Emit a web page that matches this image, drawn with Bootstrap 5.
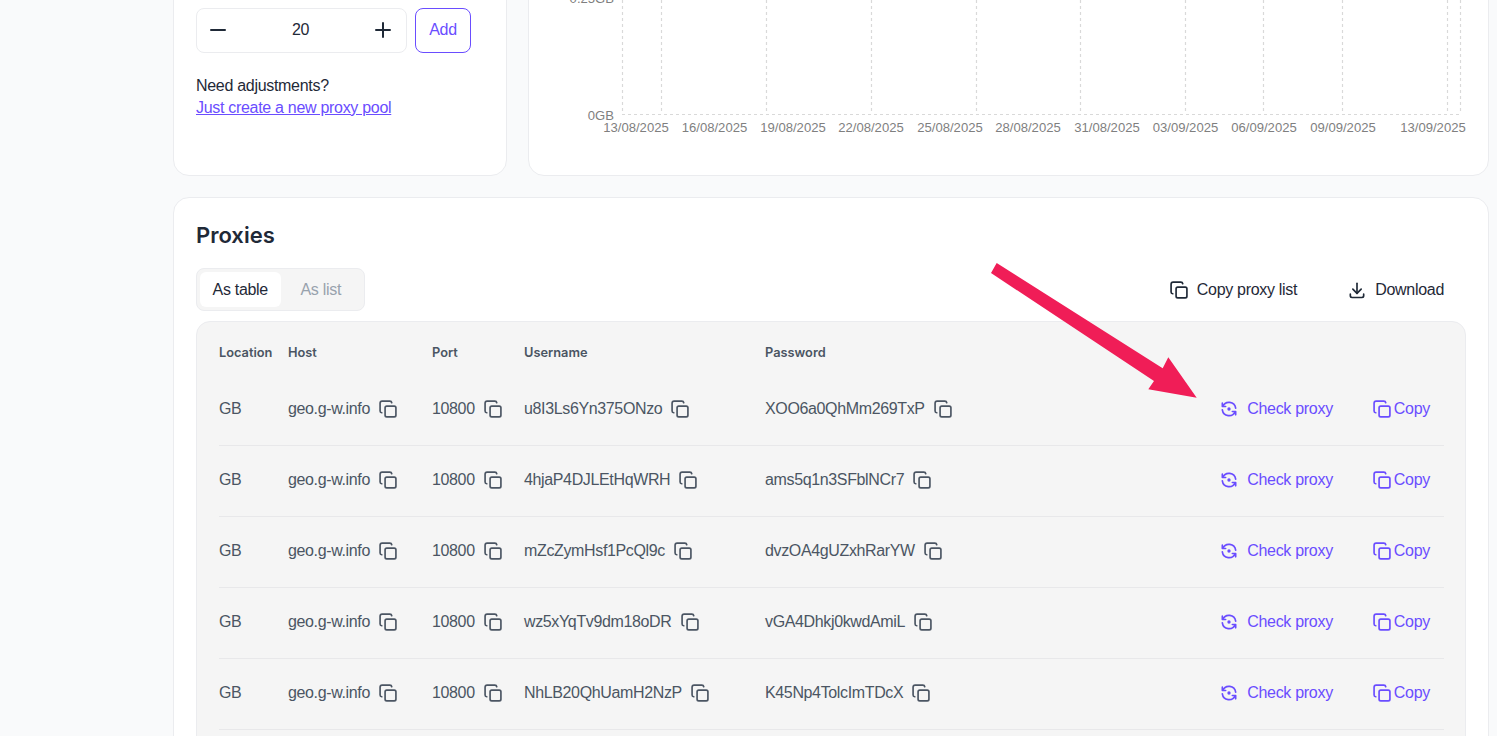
<!DOCTYPE html>
<html lang="en">
<head>
<meta charset="utf-8">
<title>Proxies</title>
<link href="https://cdn.jsdelivr.net/npm/bootstrap@5.3.0/dist/css/bootstrap.min.css" rel="stylesheet">
<style>
:root{--brand:#6a4dff;--line:#ebecef;}
html,body{height:736px;overflow:hidden;background:#f9fafb;}
body{font-family:"Liberation Sans",Arial,sans-serif;font-size:16px;letter-spacing:-.3px;color:#1f2937;}
.shell{position:relative;height:736px;overflow:hidden;padding:0 8px 0 173px;}
.shift{margin-top:-24px;}
.top-row{display:grid;grid-template-columns:334px 961px;column-gap:21px;margin-bottom:21px;}
.panel{background:#fff;border:1px solid var(--line);border-radius:16px;}
.top-panel{height:200px;}
.left-panel{padding:31px 22px 0;}
.stepper{width:211px;height:45px;border:1px solid var(--line);border-radius:8px;padding:0 11px 2px 9px;color:#1f2937;}
.stepper svg{width:24px;height:24px;}
.add-btn{width:56px;height:45px;border:1px solid var(--brand);border-radius:8px;color:var(--brand);background:#fff;padding:0 0 2px;font-size:inherit;letter-spacing:inherit;}
.need{margin-top:22px;line-height:22px;color:#1f2937;}
.need a{color:var(--brand);display:block;}
.chart{display:block;width:100%;height:100%;}
.chart text{font-family:"Liberation Sans",Arial,sans-serif;font-size:13.1px;letter-spacing:0;fill:#7f7f7f;}
.chart line{stroke:#d9d9d9;stroke-dasharray:3 3;stroke-width:1.2;}
.main-panel{height:700px;padding:22px 22px;}
.heading{font-family:Inter,"Liberation Sans",sans-serif;font-size:22px;font-weight:600;line-height:30px;letter-spacing:0;color:#1f2937;margin:0 0 18px;}
.toggle{padding:3px;background:#f5f5f5;border:1px solid var(--line);border-radius:8px;height:43px;width:169px;}
.toggle span{display:flex;align-items:center;justify-content:center;border-radius:6px;height:35px;width:82px;color:#98a2ad;}
.toggle .on{background:#fff;color:#1f2937;}
.tool{color:#1f2937;background:none;border:0;padding:0;gap:8px;font-size:inherit;letter-spacing:inherit;}
.tool svg{width:20px;height:20px;}
.tools{gap:50px;padding-right:22px;}
.bar{height:43px;margin-bottom:10px;}
.tbl-wrap{background:#f5f5f5;border:1px solid var(--line);border-radius:14px;padding:0 22px 40px;}
.ptable{width:1225px;table-layout:fixed;border-collapse:collapse;margin:0;--bs-table-bg:transparent;}
.ptable th{font-family:Inter,"Liberation Sans",sans-serif;font-size:12.8px;font-weight:600;letter-spacing:0;color:#4b5563;height:52px;padding:10px 0 0;border:0;vertical-align:middle;background:none;}
.ptable td{height:71px;padding:0 0 1px;border:0;border-bottom:1px solid #e8e8ea;color:#4b5563;letter-spacing:-.36px;vertical-align:middle;background:none;}
.cellwrap{display:flex;align-items:center;gap:8px;}
.cp{width:20px;height:20px;flex:none;color:#4b5563;}
.act{display:flex;align-items:center;color:var(--brand);white-space:nowrap;letter-spacing:-.3px;}
.act svg{width:20px;height:20px;flex:none;}
.chk{gap:8px;}
.cpy{gap:2px;margin-left:39px;}
.acts{display:flex;justify-content:flex-end;padding-right:14px;}
.ico{fill:none;stroke:currentColor;stroke-width:2;stroke-linecap:round;stroke-linejoin:round;}
.arrow{position:absolute;left:0;top:0;width:1497px;height:736px;pointer-events:none;}
</style>
</head>
<body>
<svg width="0" height="0" class="position-absolute">
  <symbol id="i-copy" viewBox="0 0 24 24"><rect x="8.5" y="8.5" width="13" height="13" rx="2"/><path d="M4.5 16.5c-1.2-.2-2-1.1-2-2.2V5c0-1.4 1.100-2.500 2.500-2.500h9.300c1.100 0 2 .8 2.200 2"/></symbol>
  <symbol id="i-check" viewBox="0 0 24 24"><path d="M20 11a8.100 8.100 0 0 0-15.500-2m-.5-4v4h4"/><path d="M4 13a8.100 8.100 0 0 0 15.500 2m.5 4v-4h-4"/><circle cx="12" cy="12" r="1"/></symbol>
  <symbol id="i-down" viewBox="0 0 24 24"><path d="M4 17v2a2 2 0 0 0 2 2h12a2 2 0 0 0 2-2v-2"/><path d="M7 11l5 5l5-5"/><path d="M12 4v12"/></symbol>
</svg>
<div class="shell">
  <div class="shift">
    <div class="top-row">
      <section class="panel top-panel left-panel">
        <div class="d-flex gap-2">
          <div class="stepper d-flex align-items-center justify-content-between">
            <svg viewBox="0 0 24 24" class="ico"><path d="M5 12h14"/></svg>
            <span>20</span>
            <svg viewBox="0 0 24 24" class="ico"><path d="M12 5v14M5 12h14"/></svg>
          </div>
          <button class="add-btn" type="button">Add</button>
        </div>
        <div class="need">Need adjustments?<a href="#">Just create a new proxy pool</a></div>
      </section>
      <section class="panel top-panel overflow-hidden">
        <svg class="chart" viewBox="529 -23 959 198" aria-label="Traffic chart">
          <line x1="622.500" x2="622.500" y1="-24" y2="114"/><line x1="661.500" x2="661.500" y1="-24" y2="114"/>
          <line x1="766.500" x2="766.500" y1="-24" y2="114"/><line x1="871.500" x2="871.500" y1="-24" y2="114"/>
          <line x1="976.500" x2="976.500" y1="-24" y2="114"/><line x1="1080.500" x2="1080.500" y1="-24" y2="114"/>
          <line x1="1185.500" x2="1185.500" y1="-24" y2="114"/><line x1="1263.500" x2="1263.500" y1="-24" y2="114"/>
          <line x1="1342.500" x2="1342.500" y1="-24" y2="114"/><line x1="1447.500" x2="1447.500" y1="-24" y2="114"/>
          <line x1="1460.500" x2="1460.500" y1="-24" y2="114"/>
          <line x1="622" x2="1461" y1="114.500" y2="114.500"/>
          <text x="614" y="3" text-anchor="end">0.25GB</text>
          <text x="614" y="120" text-anchor="end">0GB</text>
          <g text-anchor="middle">
            <text x="636" y="132">13/08/2025</text><text x="714.500" y="132">16/08/2025</text>
            <text x="793" y="132">19/08/2025</text><text x="871" y="132">22/08/2025</text>
            <text x="950" y="132">25/08/2025</text><text x="1028" y="132">28/08/2025</text>
            <text x="1107" y="132">31/08/2025</text><text x="1185.500" y="132">03/09/2025</text>
            <text x="1264" y="132">06/09/2025</text><text x="1343" y="132">09/09/2025</text>
            <text x="1433" y="132">13/09/2025</text>
          </g>
        </svg>
      </section>
    </div>
    <section class="panel main-panel">
      <h2 class="heading">Proxies</h2>
      <div class="bar d-flex align-items-center justify-content-between">
        <div class="toggle d-flex"><span class="on">As table</span><span>As list</span></div>
        <div class="tools d-flex">
          <button type="button" class="tool d-flex align-items-center"><svg class="ico"><use href="#i-copy"/></svg>Copy proxy list</button>
          <button type="button" class="tool d-flex align-items-center"><svg class="ico"><use href="#i-down"/></svg>Download</button>
        </div>
      </div>
      <div class="tbl-wrap">
        <table class="table ptable">
          <colgroup><col style="width:69px"><col style="width:144px"><col style="width:92px"><col style="width:241px"><col style="width:330px"><col></colgroup>
          <thead><tr><th>Location</th><th>Host</th><th>Port</th><th>Username</th><th>Password</th><th></th></tr></thead>
          <tbody>
            <tr><td>GB</td><td><div class="cellwrap">geo.g-w.info<svg class="cp ico"><use href="#i-copy"/></svg></div></td><td><div class="cellwrap">10800<svg class="cp ico"><use href="#i-copy"/></svg></div></td><td><div class="cellwrap">u8I3Ls6Yn375ONzo<svg class="cp ico"><use href="#i-copy"/></svg></div></td><td><div class="cellwrap">XOO6a0QhMm269TxP<svg class="cp ico"><use href="#i-copy"/></svg></div></td><td><div class="acts"><span class="act chk"><svg class="ico"><use href="#i-check"/></svg>Check proxy</span><span class="act cpy"><svg class="ico"><use href="#i-copy"/></svg>Copy</span></div></td></tr>
            <tr><td>GB</td><td><div class="cellwrap">geo.g-w.info<svg class="cp ico"><use href="#i-copy"/></svg></div></td><td><div class="cellwrap">10800<svg class="cp ico"><use href="#i-copy"/></svg></div></td><td><div class="cellwrap">4hjaP4DJLEtHqWRH<svg class="cp ico"><use href="#i-copy"/></svg></div></td><td><div class="cellwrap">ams5q1n3SFblNCr7<svg class="cp ico"><use href="#i-copy"/></svg></div></td><td><div class="acts"><span class="act chk"><svg class="ico"><use href="#i-check"/></svg>Check proxy</span><span class="act cpy"><svg class="ico"><use href="#i-copy"/></svg>Copy</span></div></td></tr>
            <tr><td>GB</td><td><div class="cellwrap">geo.g-w.info<svg class="cp ico"><use href="#i-copy"/></svg></div></td><td><div class="cellwrap">10800<svg class="cp ico"><use href="#i-copy"/></svg></div></td><td><div class="cellwrap">mZcZymHsf1PcQl9c<svg class="cp ico"><use href="#i-copy"/></svg></div></td><td><div class="cellwrap">dvzOA4gUZxhRarYW<svg class="cp ico"><use href="#i-copy"/></svg></div></td><td><div class="acts"><span class="act chk"><svg class="ico"><use href="#i-check"/></svg>Check proxy</span><span class="act cpy"><svg class="ico"><use href="#i-copy"/></svg>Copy</span></div></td></tr>
            <tr><td>GB</td><td><div class="cellwrap">geo.g-w.info<svg class="cp ico"><use href="#i-copy"/></svg></div></td><td><div class="cellwrap">10800<svg class="cp ico"><use href="#i-copy"/></svg></div></td><td><div class="cellwrap">wz5xYqTv9dm18oDR<svg class="cp ico"><use href="#i-copy"/></svg></div></td><td><div class="cellwrap">vGA4Dhkj0kwdAmiL<svg class="cp ico"><use href="#i-copy"/></svg></div></td><td><div class="acts"><span class="act chk"><svg class="ico"><use href="#i-check"/></svg>Check proxy</span><span class="act cpy"><svg class="ico"><use href="#i-copy"/></svg>Copy</span></div></td></tr>
            <tr><td>GB</td><td><div class="cellwrap">geo.g-w.info<svg class="cp ico"><use href="#i-copy"/></svg></div></td><td><div class="cellwrap">10800<svg class="cp ico"><use href="#i-copy"/></svg></div></td><td><div class="cellwrap">NhLB20QhUamH2NzP<svg class="cp ico"><use href="#i-copy"/></svg></div></td><td><div class="cellwrap">K45Np4TolcImTDcX<svg class="cp ico"><use href="#i-copy"/></svg></div></td><td><div class="acts"><span class="act chk"><svg class="ico"><use href="#i-check"/></svg>Check proxy</span><span class="act cpy"><svg class="ico"><use href="#i-copy"/></svg>Copy</span></div></td></tr>
          </tbody>
        </table>
      </div>
    </section>
  </div>
  <svg class="arrow" viewBox="0 0 1497 736" aria-hidden="true"><polygon fill="#f01d57" points="991,273 996.700,263 1162.700,368.300 1168.300,357.300 1196.700,397.700 1148.300,389.300 1154,381"/></svg>
</div>
<script src="https://cdn.jsdelivr.net/npm/bootstrap@5.3.0/dist/js/bootstrap.bundle.min.js"></script>
</body>
</html>
